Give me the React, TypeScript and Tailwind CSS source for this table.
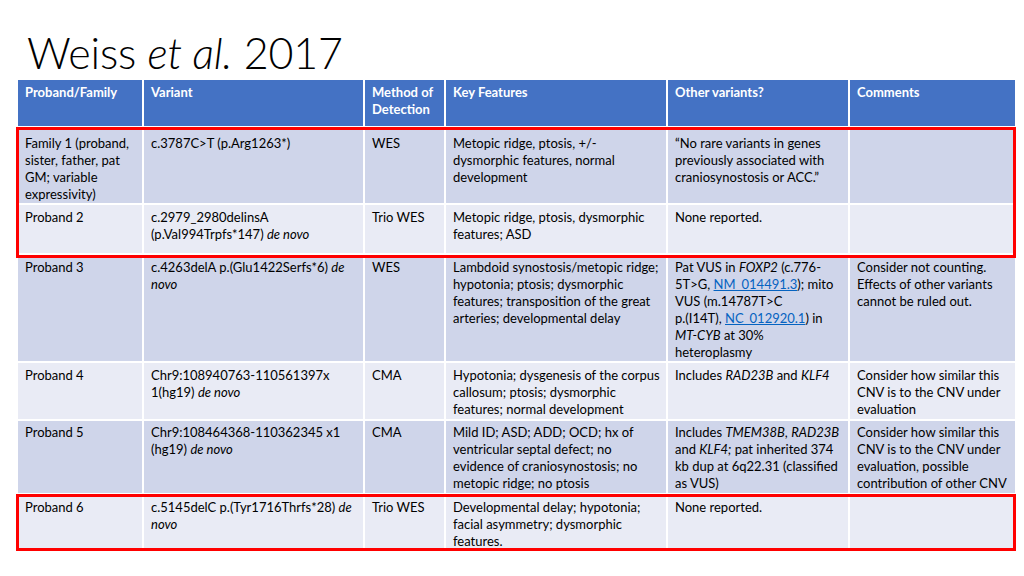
import type { ReactNode } from 'react';

const headers = ['Proband/Family', 'Variant', 'Method of\nDetection', 'Key Features', 'Other variants?', 'Comments'];

const Link = ({ children }: { children: ReactNode }) => (
  <span className="text-[#0563c1] underline">{children}</span>
);

const rows: { tone: string; pad: string; cells: ReactNode[] }[] = [
  {
    tone: 'bg-[#cfd5ea]',
    pad: 'pt-[7px]',
    cells: [
      <>Family 1 (proband,<br />sister, father, pat<br />GM; variable<br />expressivity)</>,
      <>c.3787C&gt;T (p.Arg1263*)</>,
      <>WES</>,
      <>Metopic ridge, ptosis, +/-<br />dysmorphic features, normal<br />development</>,
      <>“No rare variants in genes<br />previously associated with<br />craniosynostosis or ACC.”</>,
      null,
    ],
  },
  {
    tone: 'bg-[#e9ebf5]',
    pad: 'pt-1',
    cells: [
      <>Proband 2</>,
      <>c.2979_2980delinsA<br />(p.Val994Trpfs*147) <i>de novo</i></>,
      <>Trio WES</>,
      <>Metopic ridge, ptosis, dysmorphic<br />features; ASD</>,
      <>None reported.</>,
      null,
    ],
  },
  {
    tone: 'bg-[#cfd5ea]',
    pad: 'pt-1',
    cells: [
      <>Proband 3</>,
      <>c.4263delA p.(Glu1422Serfs*6) <i>de</i><br /><i>novo</i></>,
      <>WES</>,
      <>Lambdoid synostosis/metopic ridge;<br />hypotonia; ptosis; dysmorphic<br />features; transposition of the great<br />arteries; developmental delay</>,
      <>
        Pat VUS in <i>FOXP2</i> (c.776-<br />5T&gt;G, <Link>NM_014491.3</Link>); mito<br />VUS (m.14787T&gt;C<br />p.(I14T), <Link>NC_012920.1</Link>) in<br /><i>MT-CYB</i> at 30%<br />heteroplasmy
      </>,
      <>Consider not counting.<br />Effects of other variants<br />cannot be ruled out.</>,
    ],
  },
  {
    tone: 'bg-[#e9ebf5]',
    pad: 'pt-1',
    cells: [
      <>Proband 4</>,
      <>Chr9:108940763-110561397x<br />1(hg19) <i>de novo</i></>,
      <>CMA</>,
      <>Hypotonia; dysgenesis of the corpus<br />callosum; ptosis; dysmorphic<br />features; normal development</>,
      <>Includes <i>RAD23B</i> and <i>KLF4</i></>,
      <>Consider how similar this<br />CNV is to the CNV under<br />evaluation</>,
    ],
  },
  {
    tone: 'bg-[#cfd5ea]',
    pad: 'pt-[3px]',
    cells: [
      <>Proband 5</>,
      <>Chr9:108464368-110362345 x1<br />(hg19) <i>de novo</i></>,
      <>CMA</>,
      <>Mild ID; ASD; ADD; OCD; hx of<br />ventricular septal defect; no<br />evidence of craniosynostosis; no<br />metopic ridge; no ptosis</>,
      <>Includes <i>TMEM38B</i>, <i>RAD23B</i><br />and <i>KLF4;</i> pat inherited 374<br />kb dup at 6q22.31 (classified<br />as VUS)</>,
      <>Consider how similar this<br />CNV is to the CNV under<br />evaluation, possible<br />contribution of other CNV</>,
    ],
  },
  {
    tone: 'bg-[#e9ebf5]',
    pad: 'pt-1',
    cells: [
      <>Proband 6</>,
      <>c.5145delC p.(Tyr1716Thrfs*28) <i>de</i><br /><i>novo</i></>,
      <>Trio WES</>,
      <>Developmental delay; hypotonia;<br />facial asymmetry; dysmorphic<br />features.</>,
      <>None reported.</>,
      null,
    ],
  },
];

export default function App() {
  return (
    <div className="h-[576px] w-[1024px] overflow-hidden bg-white font-['Lato',sans-serif] text-black">
      <div className="ml-[27px] mt-[31px] h-[43px] text-[43px] font-light leading-[43px] tracking-[-0.2px]">
        Weiss <i>et al.</i> 2017
      </div>

      <div className="relative ml-[18px] mt-[6px] w-[997px]">
        <div className="grid grid-cols-[124px_219px_79px_220px_180px_165px] grid-rows-[46px_75px_48px_106px_56px_72px_53px] gap-[2px] bg-white text-[13px] leading-[17px]">
          {headers.map((h) => (
            <div key={h} className="whitespace-pre-line bg-[#4472c4] px-[7px] pt-1 font-bold text-white">
              {h}
            </div>
          ))}
          {rows.map((r, i) =>
            r.cells.map((c, j) => (
              <div key={`${i}-${j}`} className={`${r.tone} ${r.pad} whitespace-nowrap px-[7px]`}>
                {c}
              </div>
            )),
          )}
        </div>

        {/* highlight frames drawn over rows 1-2 and row 6 */}
        <div className="pointer-events-none absolute left-[-2px] right-[-1px] top-[47px] h-[131px] border-[3px] border-[#f00]" />
        <div className="pointer-events-none absolute left-[-2px] right-[-1px] top-[414px] h-[57px] border-[3px] border-[#f00]" />
      </div>
    </div>
  );
}
